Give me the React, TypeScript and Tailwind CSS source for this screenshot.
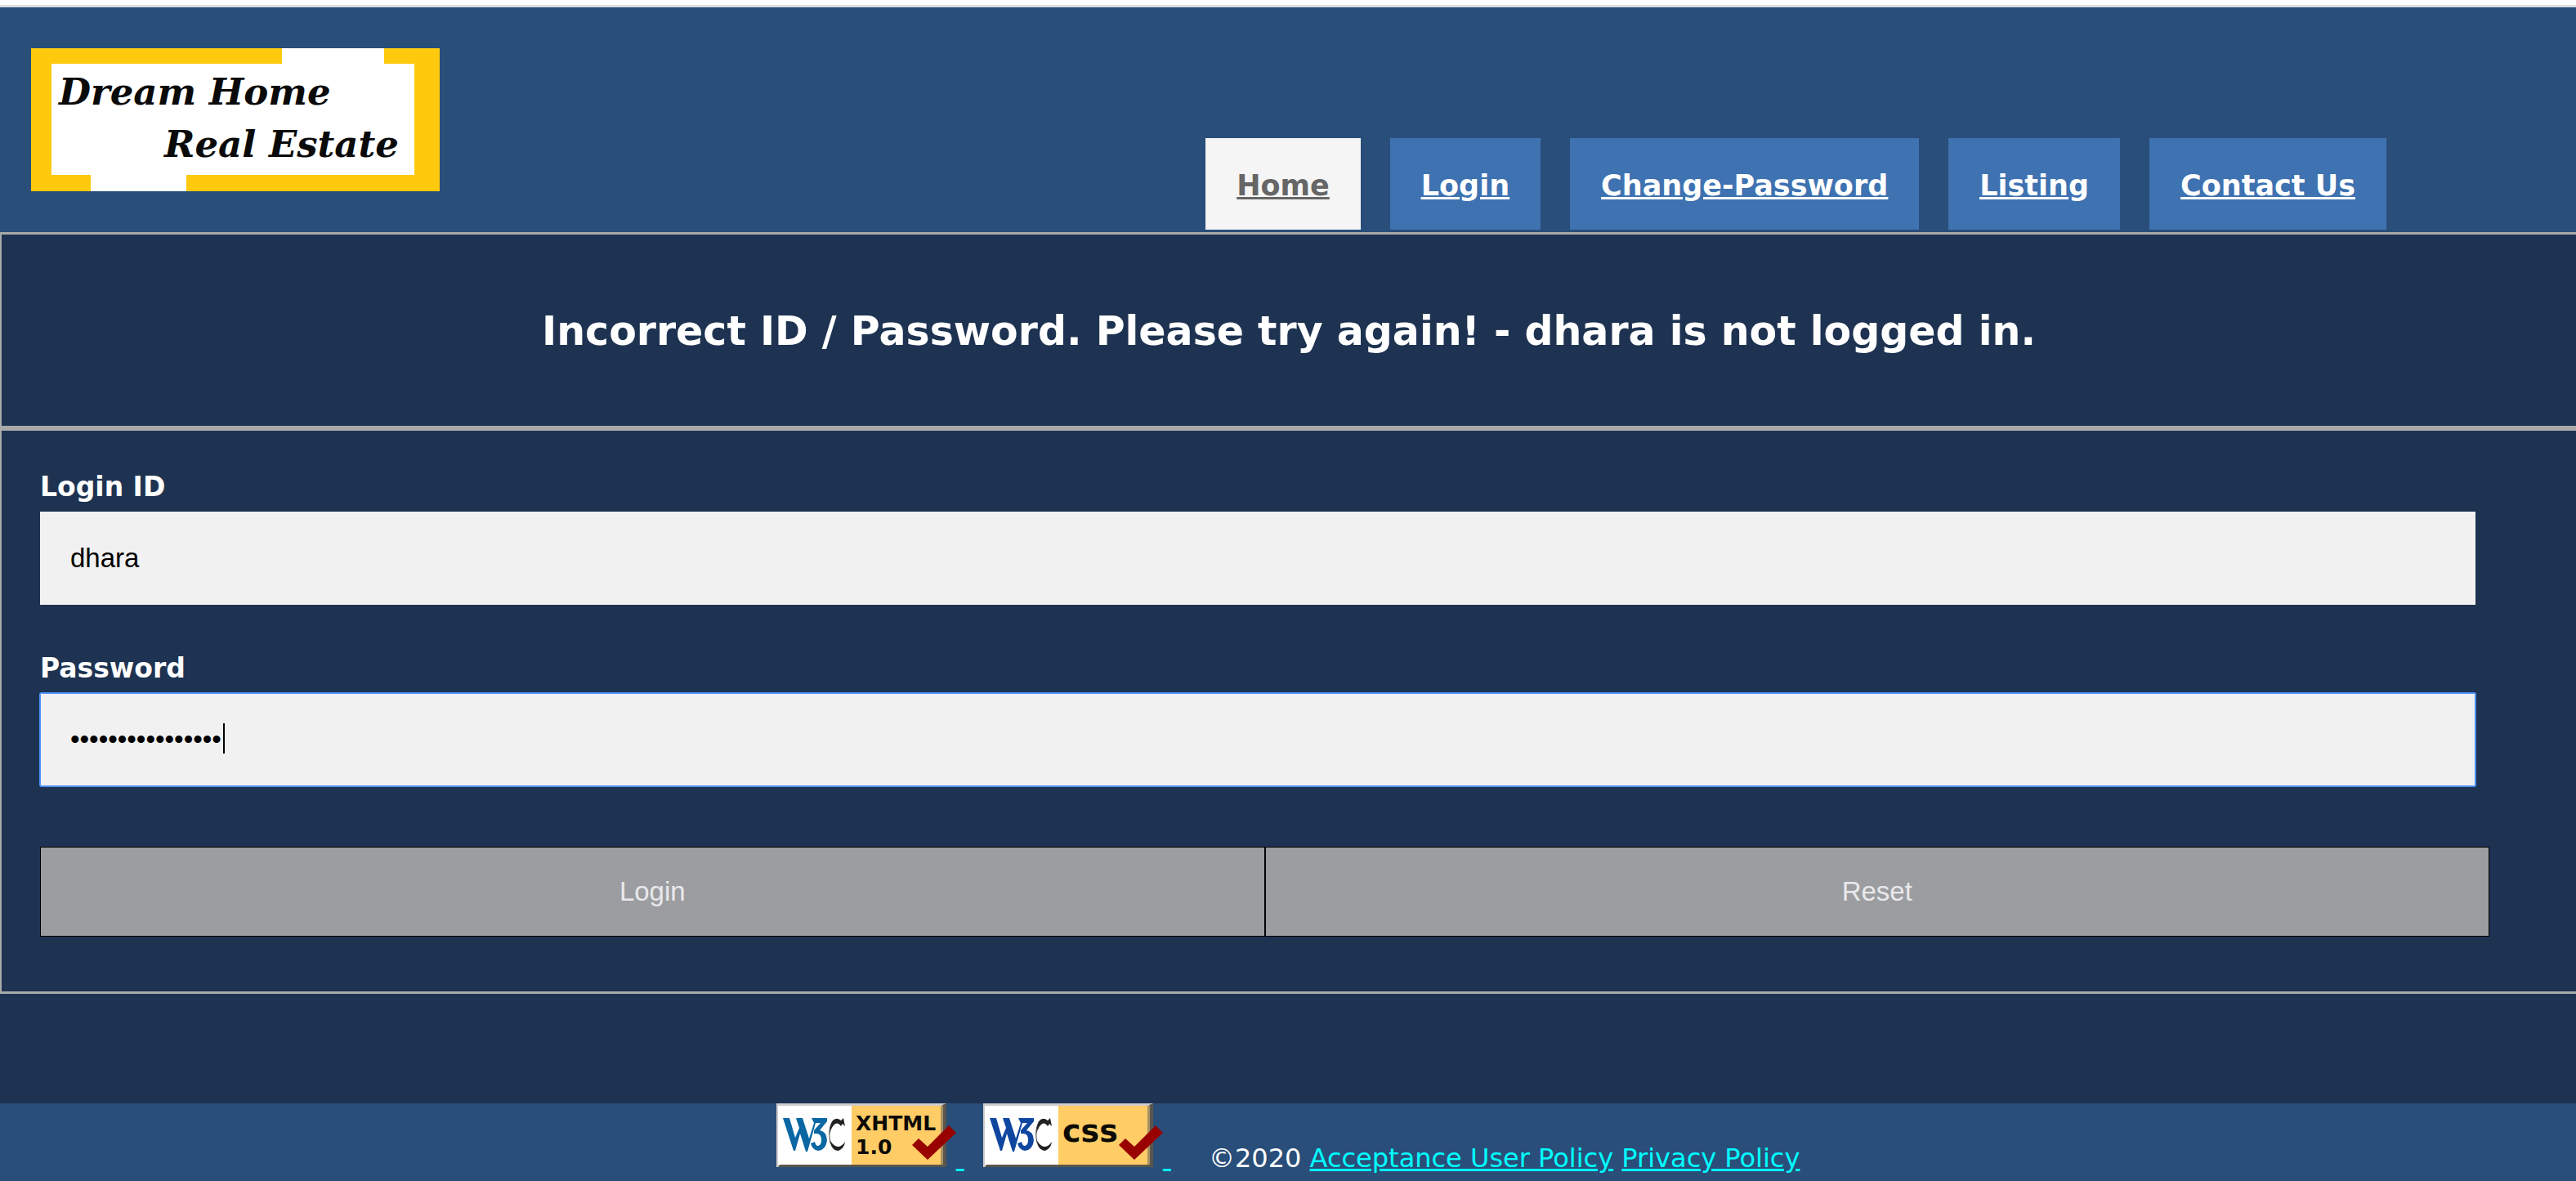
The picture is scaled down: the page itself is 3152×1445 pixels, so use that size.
import React from "react";

const NAV = ["Login", "Change-Password", "Listing", "Contact Us"];

function Logo() {
  return (
    <svg width="500" height="175" viewBox="0 0 500 175" role="img" aria-label="Dream Home Real Estate">
      <rect width="500" height="175" fill="#ffc90e" />
      <rect x="25" y="19" width="444" height="136" fill="#fff" />
      <rect x="307" y="0" width="125" height="20" fill="#fff" />
      <rect x="73" y="154" width="117" height="21" fill="#fff" />
      <g fontFamily="'DejaVu Serif', serif" fontStyle="italic" fontWeight="700" fontSize="45" fill="#0a0a0a">
        <text x="34" y="69">Dream Home</text>
        <text x="163" y="133">Real Estate</text>
      </g>
    </svg>
  );
}

function Badge({ color, lines, size }: { color: string; lines: string[]; size: number }) {
  return (
    <svg width="220" height="78" viewBox="0 0 220 78" role="img" aria-label={"Valid " + lines.join(" ")} className="inline-block align-baseline">
      <rect width="208" height="78" fill="#d0cccc" />
      <path d="M2 78L5 74H203V2L208 0V78Z" fill="#5a564c" />
      <rect x="2" y="3" width="90" height="72" fill="#fff" />
      <rect x="92" y="3" width="109" height="72" fill="#ffcc66" />
      <path d="M201 3h3v72h-3z" fill="#a89264" />
      <path
        d="M8 18H16L23 42L28 30L24 18H32L40 43L46 24L43 18H62V22L53 33Q61 34 62 45Q61 57 51 58Q44 57 42 49L47 47Q48 52 51 52Q55 51 55 45Q55 37 49 37H46V33L54 24H48L38 59H36L29 37L23 58H21Z"
        fill={color}
      />
      <path d="M84 28L82 18L79 21Q73 16 68 22Q65 28 65 38Q67 29 72 25Q76 23 79 28L81 25Z" fill="#222" />
      <path d="M65 44Q69 52 75 53Q80 53 84 47Q83 55 76 58Q67 58 65 44Z" fill="#222" />
      <path d="M67 25Q63 35 66 48" fill="none" stroke="#444" strokeWidth="1" />
      <g fontFamily="'DejaVu Sans', sans-serif" fontWeight="700" fontSize={size} fill="#0c0a05">
        {lines.map((line, i) => (
          <text key={line} x="97" y={(lines.length === 1 ? 47 : 33) + i * 29}>
            {line}
          </text>
        ))}
      </g>
      <path d="M166 51L174 43L185 53L211 27L220 36L185 69Z" fill="#990000" />
    </svg>
  );
}

export default function App() {
  const field =
    "block h-[114px] w-full bg-[#f1f1f1] px-[37px] font-['Liberation_Sans',Arial,sans-serif] text-[33px] text-black outline-none";
  const button =
    "h-[110px] flex-1 border border-black bg-[#9c9da0] font-['Liberation_Sans',Arial,sans-serif] text-[33px] text-[#e9e9ec]";
  return (
    <div className="bg-white pt-[6px] font-['DejaVu_Sans',Verdana,sans-serif] text-[33px] text-white">
      <header className="flex items-end justify-between border-t-[3px] border-[#dddddd] bg-[#294e79] pr-[232px] pb-[3px] pl-[38px]">
        <div className="pt-[50px] pb-[47px]">
          <Logo />
        </div>
        <nav className="flex gap-9 text-[35px] font-bold underline">
          <a href="#home" className="flex h-28 items-center bg-[#f5f5f5] px-[38px] pt-1 text-[#666666]">
            Home
          </a>
          {NAV.map((item) => (
            <a key={item} href={"#" + item} className="flex h-28 items-center bg-[#3e72b1] px-[38px] pt-1">
              {item}
            </a>
          ))}
        </nav>
      </header>
      <main className="bg-[#1e3351] pb-[134px]">
        <section className="border-y-[3px] border-l-2 border-[#a9a9a9] px-12 pt-[86px] pb-[82px]">
          <h1 className="text-center text-[49px] leading-[66px] font-bold">
            Incorrect ID / Password. Please try again! - dhara is not logged in.
          </h1>
        </section>
        <form
          className="border-y-[3px] border-l-2 border-[#a9a9a9] pt-[48px] pr-[106px] pb-[67px] pl-[47px]"
          onSubmit={(e) => e.preventDefault()}
        >
          <div className="mr-[17px]">
            <label htmlFor="login" className="block pb-[9px] leading-[42px] font-bold">
              Login ID
            </label>
            <input id="login" type="text" defaultValue="dhara" className={field} />
            <label htmlFor="password" className="mt-[57px] block pb-[9px] leading-[42px] font-bold">
              Password
            </label>
            <div className="relative">
              <input
                id="password"
                type="password"
                defaultValue="dharapatel123456"
                className={field + " rounded-xs ring-1 ring-[#4d90fe] inset-ring-1 inset-ring-[#4d90fe]"}
              />
              <span className="absolute top-[37px] left-[224px] h-[37px] w-[2px] bg-black" />
            </div>
          </div>
          <div className="mt-[74px] flex">
            <button type="submit" className={button}>
              Login
            </button>
            <button type="reset" className={button}>
              Reset
            </button>
          </div>
        </form>
      </main>
      <footer className="flex items-baseline justify-center bg-[#294e79] pb-2 text-[32px] leading-[40px]">
        <a href="#xhtml" className="whitespace-pre text-[#00ffff] underline">
          <Badge color="#0a67a3" lines={["XHTML", "1.0"]} size={25} />{" "}
        </a>
        <a href="#css" className="ml-[23px] whitespace-pre text-[#00ffff] underline">
          <Badge color="#0f47a0" lines={["css"]} size={38} />{" "}
        </a>
        <p className="ml-[46px] text-white">
          ©2020{" "}
          <a href="#policy" className="text-[#00ffff] underline">
            Acceptance User Policy
          </a>{" "}
          <a href="#privacy" className="text-[#00ffff] underline">
            Privacy Policy
          </a>
        </p>
      </footer>
    </div>
  );
}
